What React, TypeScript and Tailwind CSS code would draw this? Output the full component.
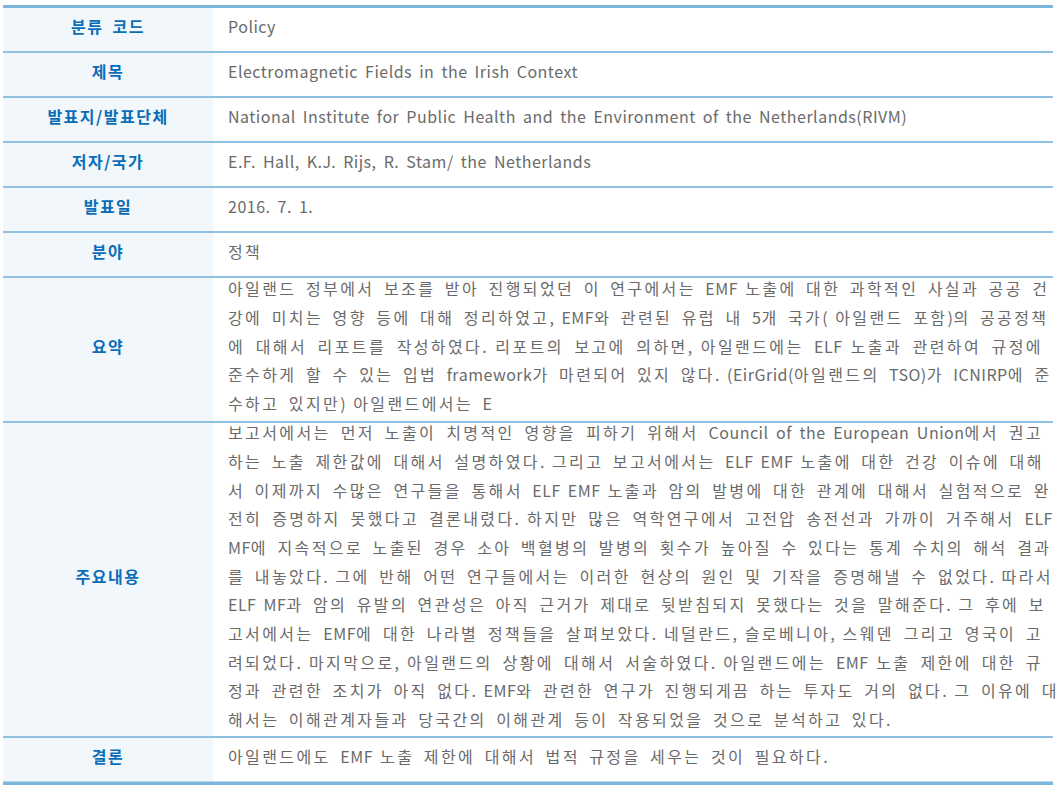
type Row = {
  label: string,
  lines: string[],
  height: string,
  wide?: number[]
}

const rows: Row[] = [
  { label: '분류 코드', lines: ['Policy'], height: 'h-[45px]' },
  { label: '제목', lines: ['Electromagnetic Fields in the Irish Context'], height: 'h-[45px]' },
  {
    label: '발표지/발표단체',
    lines: ['National Institute for Public Health and the Environment of the Netherlands(RIVM)'],
    height: 'h-[45px]'
  },
  { label: '저자/국가', lines: ['E.F. Hall, K.J. Rijs, R. Stam/ the Netherlands'], height: 'h-[45px]' },
  { label: '발표일', lines: ['2016. 7. 1.'], height: 'h-[45px]' },
  { label: '분야', lines: ['정책'], height: 'h-[45px]' },
  {
    label: '요약',
    lines: [
      '아일랜드 정부에서 보조를 받아 진행되었던 이 연구에서는 EMF 노출에 대한 과학적인 사실과 공공 건',
      '강에 미치는 영향 등에 대해 정리하였고, EMF와 관련된 유럽 내 5개 국가( 아일랜드 포함)의 공공정책',
      '에 대해서 리포트를 작성하였다. 리포트의 보고에 의하면, 아일랜드에는 ELF 노출과 관련하여 규정에',
      '준수하게 할 수 있는 입법 framework가 마련되어 있지 않다. (EirGrid(아일랜드의 TSO)가 ICNIRP에 준',
      '수하고 있지만) 아일랜드에서는 E'
    ],
    height: 'h-[145px]'
  },
  {
    label: '주요내용',
    lines: [
      '보고서에서는 먼저 노출이 치명적인 영향을 피하기 위해서 Council of the European Union에서 권고',
      '하는 노출 제한값에 대해서 설명하였다. 그리고 보고서에서는 ELF EMF 노출에 대한 건강 이슈에 대해',
      '서 이제까지 수많은 연구들을 통해서 ELF EMF 노출과 암의 발병에 대한 관계에 대해서 실험적으로 완',
      '전히 증명하지 못했다고 결론내렸다. 하지만 많은 역학연구에서 고전압 송전선과 가까이 거주해서 ELF',
      'MF에 지속적으로 노출된 경우 소아 백혈병의 발병의 횟수가 높아질 수 있다는 통계 수치의 해석 결과',
      '를 내놓았다. 그에 반해 어떤 연구들에서는 이러한 현상의 원인 및 기작을 증명해낼 수 없었다. 따라서',
      'ELF MF과 암의 유발의 연관성은 아직 근거가 제대로 뒷받침되지 못했다는 것을 말해준다. 그 후에 보',
      '고서에서는 EMF에 대한 나라별 정책들을 살펴보았다. 네덜란드, 슬로베니아, 스웨덴 그리고 영국이 고',
      '려되었다. 마지막으로, 아일랜드의 상황에 대해서 서술하였다. 아일랜드에는 EMF 노출 제한에 대한 규',
      '정과 관련한 조치가 아직 없다. EMF와 관련한 연구가 진행되게끔 하는 투자도 거의 없다. 그 이유에 대',
      '해서는 이해관계자들과 당국간의 이해관계 등이 작용되었을 것으로 분석하고 있다.'
    ],
    height: 'h-[315px]',
    wide: [3, 5]
  },
  { label: '결론', lines: ['아일랜드에도 EMF 노출 제한에 대해서 법적 규정을 세우는 것이 필요하다.'], height: 'h-[44px]' }
];

// hangul (and the space after it) gets wider spacing than latin, like the bitmap font in the original
function renderRuns(line: string) {
  return line.split(/([\uAC00-\uD7A3]+ ?)/).map((part, j) => {
    if (!part) return null;
    const hangul = /[\uAC00-\uD7A3]/.test(part);
    return (
      <span
        key={j}
        className={hangul ? 'tracking-[2.4px] [word-spacing:3.5px]' : 'tracking-[0.5px] [word-spacing:3px]'}
      >
        {part}
      </span>
    );
  });
}

const App = () => {
  return (
    <div className="min-h-screen bg-white pt-[5px] pl-[3px] font-['Noto_Sans_CJK_KR',sans-serif]">
      <div className="w-[1050px] border-t-[3px] border-b-[3px] border-[#7db6dc]">
        {rows.map((row, i) => (
          <div
            key={row.label}
            className={`flex ${row.height} ${i === rows.length - 1 ? 'border-b border-[#b7d7ee]' : 'border-b-2 border-[#90c0e2]'}`}
          >
            <div className="w-[210px] shrink-0 bg-[#f2f7fc] flex items-center justify-center pb-[7px] text-[16px] font-bold tracking-[1.5px] text-[#0b6db7] [word-spacing:4px]">
              {row.label}
            </div>
            <div className="flex-1 flex flex-col justify-center pl-[15px] pb-[7px] text-[16px] leading-[28.7px] text-[#6a6a6a]">
              {row.lines.map((line, j) => {
                const full = j < row.lines.length - 1;
                const wide = row.wide?.includes(j);
                return (
                  <div
                    key={line}
                    className={
                      full
                        ? `whitespace-nowrap text-justify [text-align-last:justify] ${wide ? 'w-[825px]' : 'w-[815px]'}`
                        : 'whitespace-nowrap'
                    }
                  >
                    {renderRuns(line)}
                  </div>
                );
              })}
            </div>
          </div>
        ))}
      </div>
    </div>
  )
}

export default App;
